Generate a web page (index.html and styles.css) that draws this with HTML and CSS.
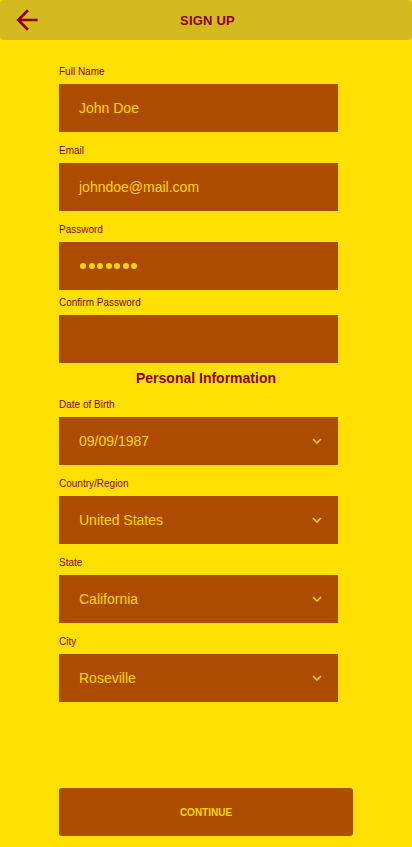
FILE: index.html
```html
<!DOCTYPE html>
<html lang="en">
<head>
<meta charset="utf-8">
<title>Sign Up</title>
<link rel="stylesheet" href="styles.css">
</head>
<body>
<div class="screen">
  <header class="topbar">
    <button class="back" aria-label="Back">
      <svg viewBox="0 0 24 24" width="32" height="32"><path fill="#8B0000" d="M20 11H7.83l5.59-5.59L12 4l-8 8 8 8 1.41-1.41L7.83 13H20v-2z"/></svg>
    </button>
    <h1 class="title">SIGN UP</h1>
  </header>

  <main class="form">
    <div class="group first">
      <label class="label">Full Name</label>
      <div class="field">John Doe</div>
    </div>
    <div class="group">
      <label class="label">Email</label>
      <div class="field">johndoe@mail.com</div>
    </div>
    <div class="group">
      <label class="label">Password</label>
      <div class="field"><span class="dots"><i></i><i></i><i></i><i></i><i></i><i></i><i></i></span></div>
    </div>
    <div class="group confirm">
      <label class="label">Confirm Password</label>
      <div class="field"></div>
    </div>

    <h2 class="section">Personal Information</h2>

    <div class="group">
      <label class="label">Date of Birth</label>
      <div class="field select"><span>09/09/1987</span><svg class="chev" viewBox="0 0 24 24" width="18" height="18"><path fill="#FFD600" d="M16.59 8.59L12 13.17 7.41 8.59 6 10l6 6 6-6z"/></svg></div>
    </div>
    <div class="group">
      <label class="label">Country/Region</label>
      <div class="field select"><span>United States</span><svg class="chev" viewBox="0 0 24 24" width="18" height="18"><path fill="#FFD600" d="M16.59 8.59L12 13.17 7.41 8.59 6 10l6 6 6-6z"/></svg></div>
    </div>
    <div class="group">
      <label class="label">State</label>
      <div class="field select"><span>California</span><svg class="chev" viewBox="0 0 24 24" width="18" height="18"><path fill="#FFD600" d="M16.59 8.59L12 13.17 7.41 8.59 6 10l6 6 6-6z"/></svg></div>
    </div>
    <div class="group">
      <label class="label">City</label>
      <div class="field select"><span>Roseville</span><svg class="chev" viewBox="0 0 24 24" width="18" height="18"><path fill="#FFD600" d="M16.59 8.59L12 13.17 7.41 8.59 6 10l6 6 6-6z"/></svg></div>
    </div>

    <button class="continue">CONTINUE</button>
  </main>
</div>
</body>
</html>
```
FILE: styles.css
```css
* { box-sizing: border-box; }
html, body {
  margin: 0;
  padding: 0;
  background: #FFE000;
  font-family: "Liberation Sans", Arial, sans-serif;
}
.screen {
  width: 412px;
  min-height: 847px;
  background: #FFE000;
}
.topbar {
  height: 40px;
  background: #D4BA1F;
  border-radius: 4px;
  display: flex;
  align-items: center;
  justify-content: center;
  position: relative;
}
.back {
  position: absolute;
  left: 11px;
  top: 4px;
  width: 32px;
  height: 32px;
  padding: 0;
  border: 0;
  background: none;
  display: flex;
}
.title {
  margin: 0 0 0 3px;
  font-size: 13px;
  font-weight: bold;
  color: #8B0000;
  letter-spacing: 0.2px;
}
.form {
  padding: 26px 59px 0 59px;
  display: flex;
  flex-direction: column;
}
.group {
  margin-top: 13px;
  display: flex;
  flex-direction: column;
}
.group.first { margin-top: 0; }
.group.confirm { margin-top: 7px; }
.label {
  font-size: 10px;
  line-height: 12px;
  height: 12px;
  color: #8B0000;
  margin-bottom: 6px;
}
.field {
  width: 279px;
  height: 48px;
  background: #AD4C00;
  color: #FFD600;
  font-size: 14px;
  padding-left: 20px;
  display: flex;
  align-items: center;
}
.select {
  justify-content: space-between;
  padding-right: 12px;
}
.chev { display: block; }
.dots {
  display: flex;
  gap: 2.5px;
  margin-left: 1px;
}
.dots i {
  width: 6px;
  height: 6px;
  border-radius: 50%;
  background: #FFD600;
  display: block;
}
.section {
  margin: 7px 0 0 0;
  width: 294px;
  text-align: center;
  font-size: 14px;
  line-height: 16px;
  font-weight: bold;
  color: #8B0000;
}
.continue {
  margin-top: 86px;
  width: 294px;
  height: 48px;
  border: 0;
  border-radius: 3px;
  background: #AD4C00;
  color: #FFD600;
  font-family: "Liberation Sans", Arial, sans-serif;
  font-size: 10px;
  font-weight: bold;
}
```
